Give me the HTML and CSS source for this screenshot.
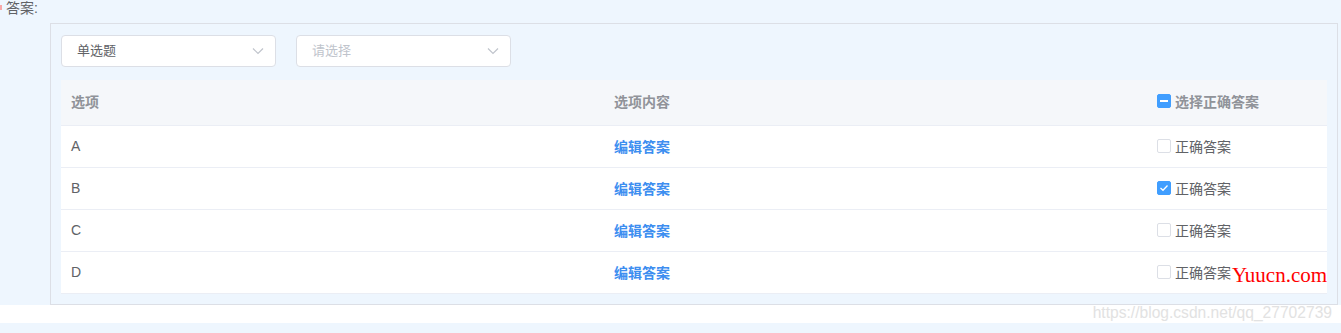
FILE: index.html
```html
<!DOCTYPE html>
<html>
<head>
  <meta charset="UTF-8">
  <title>答案</title>
  <link rel="stylesheet" href="styles.css">
</head>
<body>
  <div class="page">
    <div class="field_label"><span class="req"></span>答案:</div>

    <div class="answer_box">
      <div class="selects">
        <div class="select">
          <span class="val">单选题</span>
          <svg class="arrow" width="12" height="8" viewBox="0 0 12 8"><path d="M1 1.5 L6 6.5 L11 1.5" fill="none" stroke="#c0c4cc" stroke-width="1.2"/></svg>
        </div>
        <div class="select placeholder">
          <span class="val">请选择</span>
          <svg class="arrow" width="12" height="8" viewBox="0 0 12 8"><path d="M1 1.5 L6 6.5 L11 1.5" fill="none" stroke="#c0c4cc" stroke-width="1.2"/></svg>
        </div>
      </div>

      <table class="options">
        <thead>
          <tr>
            <th class="col_a">选项</th>
            <th class="col_b">选项内容</th>
            <th class="col_c">
              <label class="check"><span class="box half"></span>选择正确答案</label>
            </th>
          </tr>
        </thead>
        <tbody>
          <tr>
            <td>A</td>
            <td><a class="edit">编辑答案</a></td>
            <td><label class="check"><span class="box"></span>正确答案</label></td>
          </tr>
          <tr>
            <td>B</td>
            <td><a class="edit">编辑答案</a></td>
            <td><label class="check"><span class="box on"><svg width="10" height="8" viewBox="0 0 10 8"><path d="M1.5 4 L4 6.3 L8.5 1.5" fill="none" stroke="#fff" stroke-width="1.3"/></svg></span>正确答案</label></td>
          </tr>
          <tr>
            <td>C</td>
            <td><a class="edit">编辑答案</a></td>
            <td><label class="check"><span class="box"></span>正确答案</label></td>
          </tr>
          <tr>
            <td>D</td>
            <td><a class="edit">编辑答案</a></td>
            <td><label class="check"><span class="box"></span>正确答案</label></td>
          </tr>
        </tbody>
      </table>
    </div>

    <div class="white_band"></div>

    <div class="mark_red">Yuucn.com</div>
    <div class="mark_url">https://blog.csdn.net/qq_27702739</div>
  </div>
</body>
</html>
```

FILE: styles.css
```css
* {
  box-sizing: border-box;
}
body {
  margin: 0;
  background-color: #eef6fe;
  font-family: "Liberation Sans", "Noto Sans CJK SC", sans-serif;
  color: #606266;
}
.page {
  position: relative;
  width: 1341px;
  height: 333px;
  overflow: hidden;
}
.field_label {
  height: 23px;
  padding: 0 0 0 6px;
  font-size: 14px;
  line-height: 16px;
  position: relative;
}
.req {
  position: absolute;
  left: 0;
  top: 5px;
  width: 2px;
  height: 5px;
  background: #f7a8a8;
}
.answer_box {
  margin-left: 50px;
  width: 1288px;
  height: 282px;
  border: 1px solid #dcdfe6;
  padding: 11px 10px 10px 10px;
}
.selects {
  display: flex;
  gap: 20px;
  margin-bottom: 13px;
}
.select {
  width: 215px;
  height: 32px;
  background: #fff;
  border: 1px solid #dcdfe6;
  border-radius: 4px;
  display: flex;
  align-items: center;
  justify-content: space-between;
  padding: 0 11px 0 15px;
  font-size: 13px;
  color: #606266;
}
.select .val {
  margin-top: -3px;
}
.select.placeholder {
  color: #c0c4cc;
}
.options {
  width: 1266px;
  border-collapse: collapse;
  background: #fff;
  font-size: 14px;
}
.options th {
  background: #f5f7fa;
  color: #909399;
  font-weight: bold;
  text-align: left;
  height: 45px;
  padding: 0 10px 2px;
  border-bottom: 1px solid #ebeef5;
}
.options td {
  height: 42px;
  padding: 0 10px;
  border-bottom: 1px solid #ebeef5;
}
.col_a {
  width: 543px;
}
.col_b {
  width: 543px;
}
.col_c {
  width: 180px;
}
.edit {
  color: #3d8ef0;
  font-weight: bold;
}
.check {
  display: flex;
  align-items: center;
}
.box {
  width: 14px;
  height: 14px;
  border: 1px solid #dcdfe6;
  border-radius: 2px;
  background: #fff;
  margin-right: 4px;
  display: flex;
  align-items: center;
  justify-content: center;
}
.box.on {
  background: #409eff;
  border-color: #409eff;
}
.box.half {
  background: #409eff;
  border-color: #409eff;
}
.box.half::after {
  content: "";
  width: 8px;
  height: 2px;
  background: #fff;
}
.white_band {
  height: 18px;
  background: #fff;
}
.mark_red {
  position: absolute;
  left: 1232px;
  top: 263px;
  font-family: "Liberation Serif", serif;
  font-size: 21px;
  color: #f00;
}
.mark_url {
  position: absolute;
  right: 9px;
  top: 304px;
  font-family: "Liberation Sans", sans-serif;
  font-size: 15.6px;
  color: #e2e2e2;
}
```
